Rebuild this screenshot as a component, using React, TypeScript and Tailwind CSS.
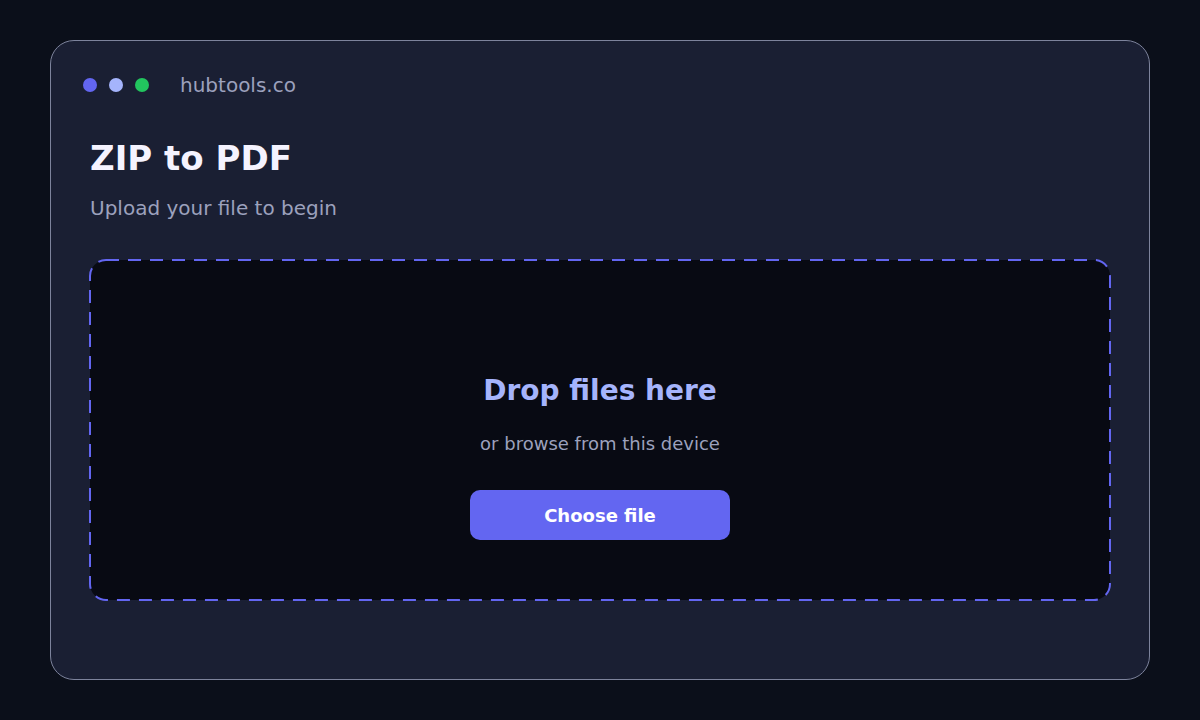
import React from "react";

export default function App() {
  return (
    <div
      className="w-[1200px] h-[720px] bg-[#0b0f1a] pt-[40px] px-[50px]"
      style={{ fontFamily: '"DejaVu Sans", sans-serif' }}
    >
      <div className="h-[640px] rounded-[24px] border border-[#7d839c] bg-[#1a1f33] pt-[32px] px-[39px]">
        <div className="flex items-center h-[24px] -ml-[7px]">
          <span className="w-[14px] h-[14px] rounded-full bg-[#6366f1]" />
          <span className="w-[14px] h-[14px] rounded-full bg-[#a5b4fc] ml-[12px]" />
          <span className="w-[14px] h-[14px] rounded-full bg-[#22c55e] ml-[12px]" />
          <span className="ml-[31px] text-[20px] leading-[24px] text-[#9ca1bd]">hubtools.co</span>
        </div>
        <h1 className="mt-[41px] text-[34px] leading-[40px] font-bold text-[#f5f3ff]">ZIP to PDF</h1>
        <p className="mt-[18px] text-[20px] leading-[24px] text-[#9ca1bd]">Upload your file to begin</p>
        <div className="relative mt-[40px] h-[340px] rounded-[16px] bg-[#080a13] flex flex-col items-center pt-[114px]">
          <svg className="absolute inset-0 w-full h-full overflow-visible pointer-events-none">
            <rect
              x="0"
              y="0"
              width="100%"
              height="100%"
              rx="16"
              ry="16"
              fill="none"
              stroke="#6366f1"
              strokeWidth="2"
              strokeDasharray="13 9"
            />
          </svg>
          <div className="text-[28px] leading-[34px] font-bold text-[#a5b4fc]">Drop files here</div>
          <div className="mt-[24px] text-[18px] leading-[24px] text-[#9ca1bd]">or browse from this device</div>
          <button className="mt-[34px] w-[260px] h-[50px] rounded-[10px] bg-[#6366f1] text-white text-[18px] font-bold">
            Choose file
          </button>
        </div>
      </div>
    </div>
  );
}
